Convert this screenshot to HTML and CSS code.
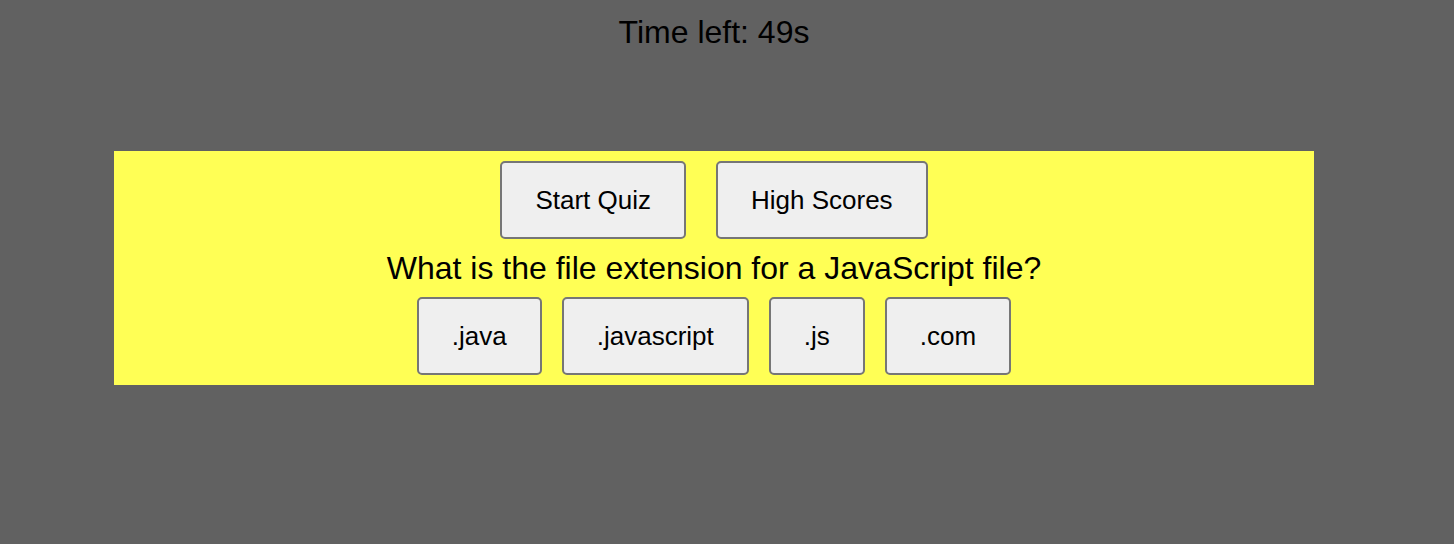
FILE: index.html
```html
<!DOCTYPE html>
<html lang="en">
<head>
<meta charset="utf-8">
<title>Quiz</title>
<link rel="stylesheet" href="styles.css">
</head>
<body>
  <div class="page">
    <div class="timer">Time left: 49s</div>
    <main class="quiz">
      <div class="controls">
        <button class="btn">Start Quiz</button>
        <button class="btn">High Scores</button>
      </div>
      <div class="question">What is the file extension for a JavaScript file?</div>
      <div class="answers">
        <button class="btn">.java</button>
        <button class="btn">.javascript</button>
        <button class="btn">.js</button>
        <button class="btn">.com</button>
      </div>
    </main>
  </div>
</body>
</html>
```
FILE: styles.css
```css
html, body {
  margin: 0;
  padding: 0;
}
body {
  background: #616161;
  font-family: "Liberation Sans", Arial, sans-serif;
  color: #000;
}
.page {
  width: 1200px;
  margin-left: 114px;
  padding-top: 14px;
}
.timer {
  text-align: center;
  font-size: 32px;
  line-height: 37px;
}
.quiz {
  margin-top: 100px;
  background: #ffff55;
  padding: 10px 0;
  display: flex;
  flex-direction: column;
  align-items: center;
}
.controls {
  display: flex;
  gap: 30px;
}
.answers {
  display: flex;
  gap: 20px;
}
.question {
  font-size: 32px;
  line-height: 38px;
  margin: 10px 0;
}
.btn {
  font-family: "Liberation Sans", Arial, sans-serif;
  font-size: 26px;
  height: 78px;
  padding: 0 33px;
  background: #efefef;
  border: 2px solid #767676;
  border-radius: 5px;
  color: #000;
  box-sizing: border-box;
}
```
